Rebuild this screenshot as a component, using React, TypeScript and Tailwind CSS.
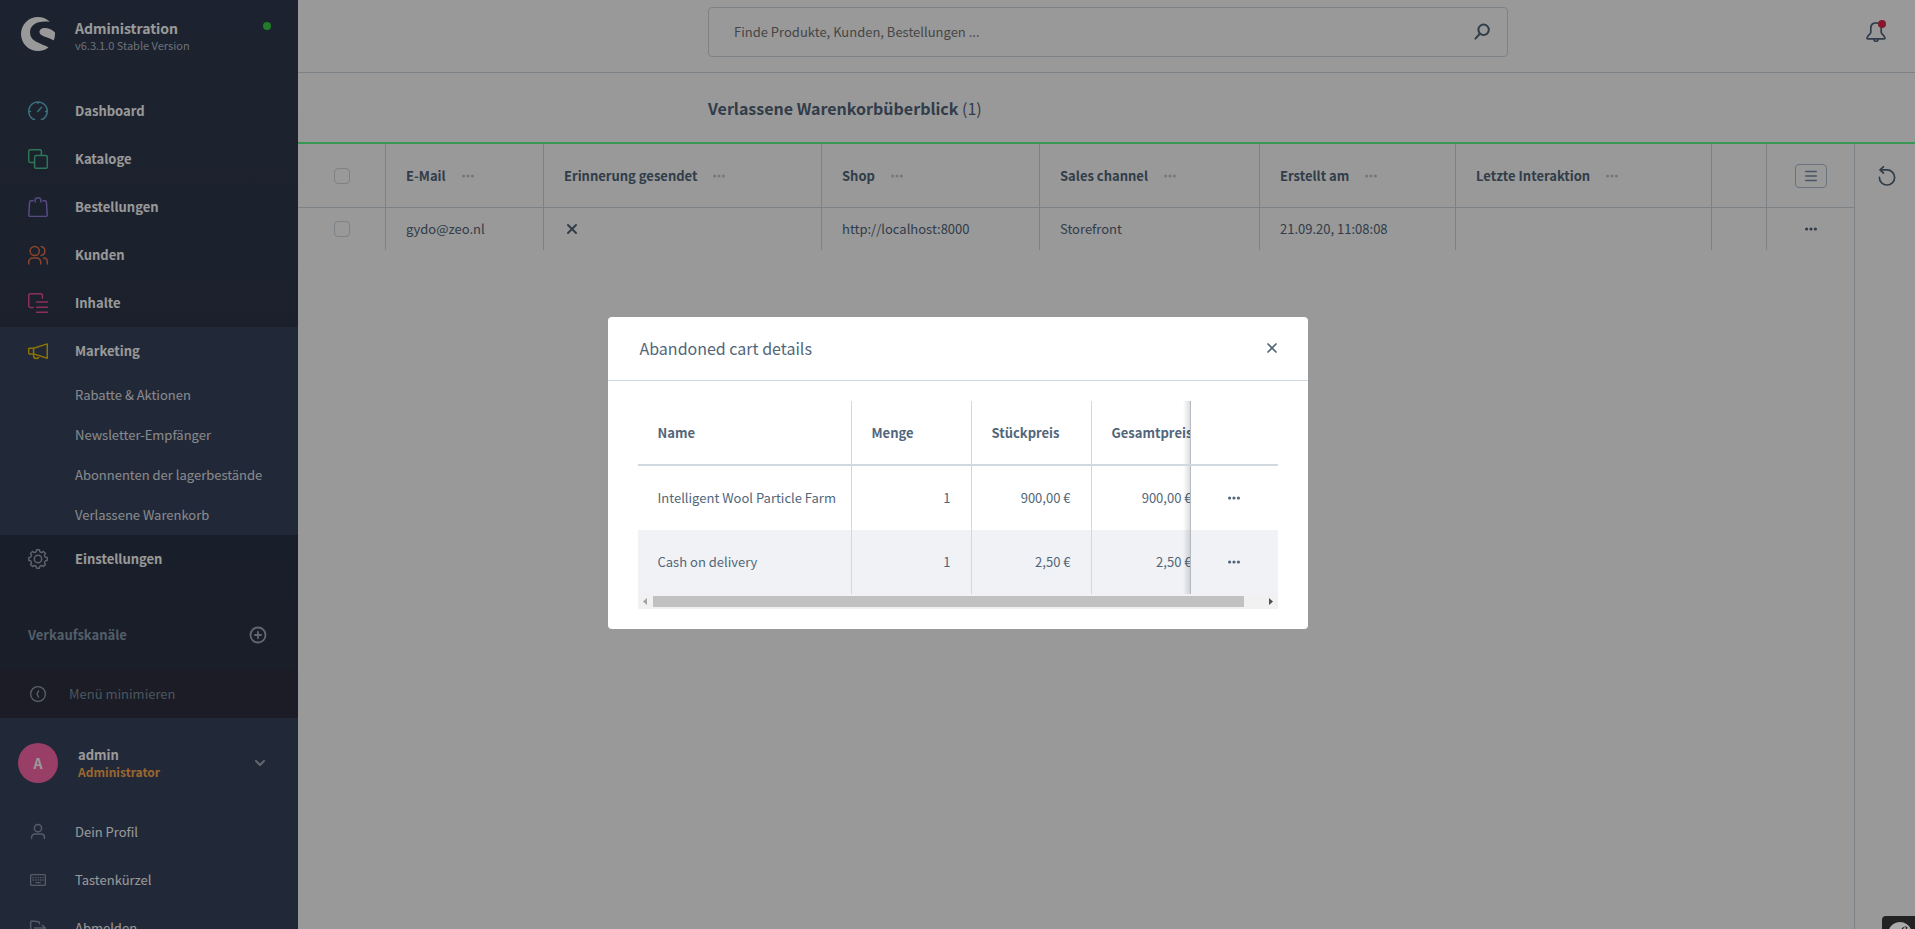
import React from 'react';
import { ChevronDown, CirclePlus, X } from 'lucide-react';
import { SiShopware, SiSymfony } from 'react-icons/si';

interface IconProps {
  className?: string;
}

interface NavItem {
  label: string;
  icon: React.ReactNode;
  children?: string[];
}

// eight tooth cog outline on a 20x20 canvas
const gearPath = Array.from({ length: 8 }, (_, i) => {
  const at = (deg: number, r: number) => {
    const a = ((i * 45 + deg) * Math.PI) / 180;
    return `${(10 + r * Math.sin(a)).toFixed(2)} ${(10 - r * Math.cos(a)).toFixed(2)}`;
  };
  return `${i === 0 ? 'M' : 'L'}${at(-9, 9.3)} L${at(9, 9.3)} L${at(13, 7.7)} Q${at(22.5, 6.9)} ${at(32, 7.7)}`;
}).join(' ') + 'Z';

const Icon: React.FC<React.SVGProps<SVGSVGElement>> = ({ children, ...props }) => (
  <svg
    width="20"
    height="20"
    viewBox="0 0 20 20"
    fill="none"
    stroke="currentColor"
    strokeWidth="1.5"
    strokeLinecap="round"
    strokeLinejoin="round"
    aria-hidden="true"
    {...props}
  >
    {children}
  </svg>
);

const Dots: React.FC<IconProps> = ({ className }) => (
  <svg width="12" height="4" viewBox="0 0 12 4" fill="currentColor" aria-hidden="true" className={className}>
    <circle cx="1.6" cy="2" r="1.6" />
    <circle cx="6" cy="2" r="1.6" />
    <circle cx="10.4" cy="2" r="1.6" />
  </svg>
);

const navItems: NavItem[] = [
  {
    label: 'Dashboard',
    icon: (
      <Icon className="text-[#63b7cf]">
        <path d="M6.6 18.3H5.4A9.3 9.3 0 1 1 14.6 18.3h-1.2M10 .9v1.7M.8 10.4h1.7M17.5 10.4h1.7M9.8 10.4l3.8-4.2" />
      </Icon>
    ),
  },
  {
    label: 'Kataloge',
    icon: (
      <Icon className="text-[#4bc690]">
        <rect x="6.6" y="6.6" width="12.7" height="12.7" rx="1.6" />
        <path d="M6.2 13.4H2.3A1.6 1.6 0 0 1 .7 11.8V2.3A1.6 1.6 0 0 1 2.3.7h9.5a1.6 1.6 0 0 1 1.6 1.6v3.9" />
      </Icon>
    ),
  },
  {
    label: 'Bestellungen',
    icon: (
      <Icon className="text-[#8f7ddb]">
        <path d="M5 3.7H3.1a1.5 1.5 0 0 0-1.5 1.4L.8 17.9a1.4 1.4 0 0 0 1.4 1.5h15.6a1.4 1.4 0 0 0 1.4-1.5l-.8-12.8a1.5 1.5 0 0 0-1.5-1.4H15" />
        <path d="M7.2 5V2.8a1.9 1.9 0 0 1 1.9-1.9h1.8a1.9 1.9 0 0 1 1.9 1.9V5" />
      </Icon>
    ),
  },
  {
    label: 'Kunden',
    icon: (
      <Icon className="text-[#e8744a]">
        <circle cx="6.7" cy="6" r="4.6" />
        <path d="M.7 19v-2a3.9 3.9 0 0 1 3.9-3.9h4.2a3.9 3.9 0 0 1 3.900 3.900v2M13.200 1.500a4.600 4.600 0 0 1 0 9M15.600 13.100a3.900 3.900 0 0 1 3.700 3.900v2" />
      </Icon>
    ),
  },
  {
    label: 'Inhalte',
    icon: (
      <Icon className="text-[#ea4f95]">
        <path d="M5.2 14.4H2.3A1.6 1.6 0 0 1 .7 12.8V2.3A1.6 1.6 0 0 1 2.3.7h10.5a1.6 1.6 0 0 1 1.6 1.6v2.9M8.6 9.1h10.8M8.6 14.2h10.8M8.6 19.2h10.8" />
      </Icon>
    ),
  },
  {
    label: 'Marketing',
    icon: (
      <Icon className="text-[#eac100]">
        <path d="M5.6 7.2 19.3 2.9v14.3L5.6 12.9zM5.6 7.2H1.5a.8.8 0 0 0-.8.8v4.1c0 .4.4.8.8.8h4.1M5.6 12.9v1.6a2.7 2.7 0 0 0 5.4.4" />
      </Icon>
    ),
    children: ['Rabatte & Aktionen', 'Newsletter-Empfänger', 'Abonnenten der lagerbestände', 'Verlassene Warenkorb'],
  },
  {
    label: 'Einstellungen',
    icon: (
      <Icon className="text-[#98a3b3]">
        <path d={gearPath} />
        <circle cx="10" cy="10" r="3.7" />
      </Icon>
    ),
  },
];

const userActions: NavItem[] = [
  {
    label: 'Dein Profil',
    icon: (
      <Icon>
        <circle cx="10" cy="6.2" r="3.6" />
        <path d="M3.6 16.6v-1.4a3.2 3.2 0 0 1 3.2-3.2h6.4a3.2 3.2 0 0 1 3.2 3.2v1.4" />
      </Icon>
    ),
  },
  {
    label: 'Tastenkürzel',
    icon: (
      <Icon strokeWidth="1.3">
        <rect x="2.6" y="4.6" width="14.8" height="10.8" rx="1.2" />
        <path d="M5 7.6h.4M7.6 7.6H8M10.2 7.6h.4M12.6 7.6h.4M15 7.6h.2M5 10h.4M7.6 10H8M10.2 10h.4M12.6 10h.4M15 10h.2M8 12.6h4.2" />
      </Icon>
    ),
  },
  {
    label: 'Abmelden',
    icon: (
      <Icon>
        <path d="M11.4 5.8V4.6c0-.5-.4-.9-.9-.9L3.6 2.9c-.5 0-.9.3-.9.8v10.6c0 .5.4.9.9.9l6.9 1.9c.5 0 .9-.4.9-.9v-2.4M6.5 10h10.6M14.4 7.2 17.3 10l-2.9 2.8" />
      </Icon>
    ),
  },
];

const columns = [
  { label: 'E-Mail', width: 'w-[158px]', value: 'gydo@zeo.nl' },
  { label: 'Erinnerung gesendet', width: 'w-[278px]', value: <X className="size-4" strokeWidth={3} aria-label="Nein" /> },
  { label: 'Shop', width: 'w-[218px]', value: 'http://localhost:8000' },
  { label: 'Sales channel', width: 'w-[220px]', value: 'Storefront' },
  { label: 'Erstellt am', width: 'w-[196px]', value: '21.09.20, 11:08:08' },
  { label: 'Letzte Interaktion', width: '', value: '' },
];

const cartItems = [
  { name: 'Intelligent Wool Particle Farm', quantity: '1', price: '900,00 €', total: '900,00 €' },
  { name: 'Cash on delivery', quantity: '1', price: '2,50 €', total: '2,50 €' },
];

const Sidebar: React.FC = () => (
  <aside className="flex w-[298px] shrink-0 flex-col overflow-hidden bg-linear-to-b from-[#303a4f] to-[#2a3345] to-70% text-[13px] text-white">
    <div className="flex h-[87px] shrink-0 items-start pt-[17px] pr-[27px] pl-[21px]">
      <SiShopware className="size-[34px]" />
      <div className="ml-5 flex-1">
        <p className="text-[14px] leading-[22px] font-bold">Administration</p>
        <p className="text-[11px] leading-3 text-[#b4bcc8]">v6.3.1.0 Stable Version</p>
      </div>
      <span className="mt-[5px] size-2 rounded-full bg-[#37d046]" />
    </div>

    <nav className="shrink-0">
      <ul>
        {navItems.map((item) => (
          <li key={item.label} className={item.children ? 'bg-[#38435e]' : ''}>
            <a href="#" className="flex h-12 items-center gap-[27px] pl-7 font-bold">
              {item.icon}
              {item.label}
            </a>
            {item.children && (
              <ul>
                {item.children.map((child) => (
                  <li key={child}>
                    <a href="#" className="flex h-10 items-center pl-[75px] text-[#e2e5ea]">
                      {child}
                    </a>
                  </li>
                ))}
              </ul>
            )}
          </li>
        ))}
      </ul>
    </nav>

    <div className="mt-7 flex h-12 shrink-0 items-center justify-between pr-[31px] pl-7 font-bold text-[#8a9dad]">
      Verkaufskanäle
      <button type="button" aria-label="Verkaufskanal hinzufügen">
        <CirclePlus className="size-[18px] text-[#a3adba]" strokeWidth={2.4} />
      </button>
    </div>

    <button type="button" className="mt-[11px] flex h-12 shrink-0 items-center gap-[21px] bg-[#2d2f40] pl-7 text-[#7f8f9f]">
      <Icon strokeWidth="1.3" className="text-[#98a3b3]">
        <circle cx="10" cy="10" r="7.4" />
        <path d="M10.6 6.9 9 10l1.6 3.1" />
      </Icon>
      Menü minimieren
    </button>

    <div className="flex-1 bg-[#38435e]">
      <button type="button" className="flex h-[90px] w-full items-center pr-[30px] pl-[18px] text-left">
        <span className="flex size-10 items-center justify-center rounded-full bg-[#ff68ac] text-[14px] font-bold">A</span>
        <span className="ml-5 flex-1 font-bold">
          <span className="block leading-[17px]">admin</span>
          <span className="block text-[12px] leading-[17px] text-[#ffab4f]">Administrator</span>
        </span>
        <ChevronDown className="size-4 text-[#a3adba]" strokeWidth={3} />
      </button>
      <ul>
        {userActions.map((action) => (
          <li key={action.label}>
            <a href="#" className="flex h-12 items-center gap-[27px] pl-7">
              <span className="text-[#8e9aab]">{action.icon}</span>
              {action.label}
            </a>
          </li>
        ))}
      </ul>
    </div>
  </aside>
);

const CartTable: React.FC = () => (
  <table className="w-full table-fixed border-separate border-spacing-0 text-left">
    <thead>
      <tr className="h-16">
        <th className="w-[87px] border-b border-[#d1d9e0] pl-9">
          <input type="checkbox" aria-label="Alle auswählen" className="block size-4 appearance-none rounded border border-[#d1d9e0]" />
        </th>
        {columns.map((column) => (
          <th key={column.label} className={`border-b border-l border-[#d1d9e0] pl-5 font-bold ${column.width}`}>
            <span className="flex items-center gap-4">
              {column.label}
              <Dots className="text-[#c3cad2]" />
            </span>
          </th>
        ))}
        <th className="w-[55px] border-b border-l border-[#d1d9e0]" />
        <th className="w-[88px] border-b border-l border-[#d1d9e0]">
          <button
            type="button"
            aria-label="Spalten"
            className="mx-auto flex h-6 w-8 items-center justify-center rounded border border-[#b3bfd0]"
          >
            <Icon width="12" height="12" viewBox="0 0 12 12" className="text-[#758cab]">
              <path d="M.7 1.500h10.600M.7 6h10.600M.7 10.500h10.600" />
            </Icon>
          </button>
        </th>
      </tr>
    </thead>
    <tbody>
      <tr className="h-[42px]">
        <td className="pl-9">
          <input type="checkbox" aria-label="gydo@zeo.nl auswählen" className="block size-4 appearance-none rounded border border-[#d1d9e0]" />
        </td>
        {columns.map((column) => (
          <td key={column.label} className="border-l border-[#d1d9e0] pl-5">
            {column.value}
          </td>
        ))}
        <td className="border-l border-[#d1d9e0]" />
        <td className="border-l border-[#d1d9e0]">
          <button type="button" aria-label="Aktionen" className="mx-auto block">
            <Dots />
          </button>
        </td>
      </tr>
    </tbody>
  </table>
);

const stickyCell =
  "sticky right-0 w-[88px] border-l border-[#d1d9e0] before:absolute before:inset-y-0 before:-left-2 before:w-2 before:bg-linear-to-l before:from-black/15 before:to-transparent before:content-['']";

const DetailModal: React.FC = () => (
  <div className="fixed inset-0 z-10 flex items-center justify-center bg-black/40 pt-4">
    <div role="dialog" aria-labelledby="modal-title" className="w-[700px] overflow-hidden rounded bg-white">
      <div className="flex h-16 items-center justify-between border-b border-[#d1d9e0] pr-7 pl-8">
        <h2 id="modal-title" className="text-[16px]">
          Abandoned cart details
        </h2>
        <button type="button" aria-label="Schließen">
          <X className="size-4" strokeWidth={2.6} />
        </button>
      </div>

      <div className="px-[30px] py-5">
        <div className="overflow-hidden">
          <table className="w-[662px] table-fixed border-separate border-spacing-0">
            <thead>
              <tr className="h-[65px] text-left">
                <th className="w-[214px] border-r border-b-2 border-[#d1d9e0] pt-[2px] pl-5">Name</th>
                <th className="w-[120px] border-r border-b-2 border-[#d1d9e0] pt-[2px] pl-5">Menge</th>
                <th className="w-[120px] border-r border-b-2 border-[#d1d9e0] pt-[2px] pl-5">Stückpreis</th>
                <th className="w-[120px] border-b-2 border-[#d1d9e0] pt-[2px] pl-5">Gesamtpreis</th>
                <th className={`${stickyCell} border-b-2 bg-white`} />
              </tr>
            </thead>
            <tbody>
              {cartItems.map((item) => (
                <tr key={item.name} className="group h-16 text-right even:bg-[#f0f2f5]">
                  <td className="border-r border-[#d1d9e0] pl-5 text-left">{item.name}</td>
                  <td className="border-r border-[#d1d9e0] pr-5">{item.quantity}</td>
                  <td className="border-r border-[#d1d9e0] pr-5">{item.price}</td>
                  <td className="pr-5">{item.total}</td>
                  <td className={`${stickyCell} bg-white group-even:bg-[#f0f2f5]`}>
                    <button type="button" aria-label="Aktionen" className="mx-auto block">
                      <Dots />
                    </button>
                  </td>
                </tr>
              ))}
            </tbody>
          </table>
        </div>

        {/* horizontal scrollbar */}
        <div className="flex h-[15px] items-center bg-[#f1f1f1]">
          <svg width="15" height="15" viewBox="0 0 15 15" fill="#a3a3a3" aria-hidden="true">
            <path d="M9 4v7L5 7.5z" />
          </svg>
          <div className="flex-1">
            <div className="h-[11px] w-[97%] bg-[#c1c1c1]" />
          </div>
          <svg width="15" height="15" viewBox="0 0 15 15" fill="#505050" aria-hidden="true">
            <path d="M6 4v7l4-3.5z" />
          </svg>
        </div>
      </div>
    </div>
  </div>
);

const App: React.FC = () => {
  return (
    <div className="flex h-screen overflow-hidden bg-white font-['Noto_Sans_CJK_SC',sans-serif] text-[13px] text-[#52667a]">
      <Sidebar />

      <main className="flex min-w-0 flex-1 flex-col">
        <header className="grid h-[73px] grid-cols-[1fr_minmax(0,800px)_1fr] border-b border-[#d1d9e0] pt-[7px] pl-[3px]">
          <div className="col-start-2 flex h-[50px] items-center rounded border border-[#d1d9e0] pr-[15px] pl-[25px]">
            <input
              type="search"
              aria-label="Suche"
              placeholder="Finde Produkte, Kunden, Bestellungen ..."
              className="flex-1 bg-transparent outline-none placeholder:text-[#757575]"
            />
            <button type="button" aria-label="Suchen">
              <Icon strokeWidth="2">
                <circle cx="11.6" cy="7.8" r="5.2" />
                <path d="M7.8 11.8 3.4 16.6" />
              </Icon>
            </button>
          </div>
          <button type="button" aria-label="Benachrichtigungen" className="relative mt-[15px] mr-[29px] size-5 justify-self-end">
            <Icon strokeWidth="1.7">
              <path d="M10 .9c3.4 0 5.2 2.3 5.2 5.6v3.7c0 1.9 3.8 3.6 3.8 5.9 0 .5-.3.8-.8.8H1.8c-.5 0-.8-.3-.8-.8 0-2.3 3.8-4 3.8-5.9V6.500C4.800 3.200 6.600.900 10 .900zM7.900 17.200a2.100 2.100 0 0 0 4.200 0" />
            </Icon>
            <span className="absolute -top-0.5 right-0 size-2 rounded-full bg-[#de294c]" />
          </button>
        </header>

        <div className="grid h-[71px] grid-cols-[1fr_minmax(0,800px)_1fr] items-center border-b-2 border-[#61fa8a] pl-[3px]">
          <h1 className="col-start-2 text-[16px] font-bold">
            Verlassene Warenkorbüberblick <span className="font-normal">(1)</span>
          </h1>
        </div>

        <div className="flex flex-1">
          <div className="min-w-0 flex-1">
            <CartTable />
          </div>
          <div className="w-[61px] border-l border-[#d1d9e0] pt-[22px] pl-[22px]">
            <button type="button" aria-label="Aktualisieren">
              <Icon strokeWidth="1.7">
                <path d="M2.4 11.4a7.6 7.6 0 1 0 7.6-7.6H3M6.4.8 3 3.9l3.4 3.1" />
              </Icon>
            </button>
          </div>
        </div>
      </main>

      <DetailModal />

      <button
        type="button"
        aria-label="Symfony Profiler"
        className="fixed right-0 bottom-0 z-20 flex h-[13px] w-[33px] justify-center overflow-hidden rounded-tl bg-[#222] pt-[6px] pl-[3px]"
      >
        <SiSymfony className="size-6 shrink-0 text-[#aaa]" />
      </button>
    </div>
  );
};

export default App;
